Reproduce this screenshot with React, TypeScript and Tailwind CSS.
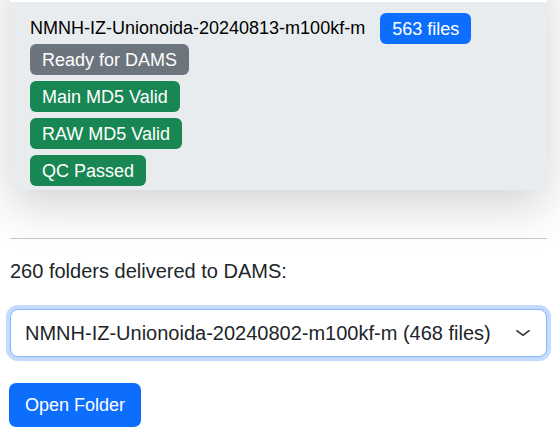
import React from 'react';

const badgeBase =
    'inline-flex items-center h-[31px] px-[12px] rounded-[6px] text-white text-[18px] leading-none';

export default function App() {
    const checks = ['Main MD5 Valid', 'RAW MD5 Valid', 'QC Passed'];

    return (
        <div
            className="w-[560px] h-[443px] overflow-hidden bg-white text-[#212529]"
            style={{ fontFamily: '"Liberation Sans", Arial, sans-serif' }}
        >
            <div className="ml-[10px] w-[537px]">
                {/* Folder card (scrolled, top cut off) */}
                <div className="-mt-[40px] bg-white rounded-[6px] shadow-[0_1rem_3rem_rgba(0,0,0,0.175)]">
                    <div className="h-[42px]" />
                    <div className="bg-[#e9ecef] rounded-b-[6px] px-[20px] pt-[11px] pb-[4px]">
                        <div className="flex items-center gap-[15px] h-[31px]">
                            <span className="text-[18px] text-black">
                                NMNH-IZ-Unionoida-20240813-m100kf-m
                            </span>
                            <span className={`${badgeBase} bg-[#0d6efd]`}>563 files</span>
                        </div>
                        <div className="flex flex-col items-start gap-[6px]">
                            <span className={`${badgeBase} bg-[#6c757d]`}>Ready for DAMS</span>
                            {checks.map((c) => (
                                <span key={c} className={`${badgeBase} bg-[#198754]`}>
                                    {c}
                                </span>
                            ))}
                        </div>
                    </div>
                </div>

                <hr className="mt-[48px] border-0 border-t border-[#c4c4c4]" />

                <p className="mt-[17px] text-[20px] leading-[30px]">260 folders delivered to DAMS:</p>

                {/* Folder select, shown focused */}
                <div className="relative mt-[23px]">
                    <select
                        className="w-full h-[48px] appearance-none bg-white border border-[#86b7fe] rounded-[8px] pl-[14px] pr-[48px] text-[20px] text-[#212529] outline-none shadow-[0_0_0_4px_rgba(13,110,253,0.25)]"
                        style={{ fontFamily: '"Liberation Sans", Arial, sans-serif' }}
                        defaultValue="a"
                    >
                        <option value="a">NMNH-IZ-Unionoida-20240802-m100kf-m (468 files)</option>
                    </select>
                    <svg
                        className="pointer-events-none absolute right-[16px] top-[18px]"
                        width="16"
                        height="12"
                        viewBox="0 0 16 16"
                        fill="none"
                        stroke="#343a40"
                        strokeWidth="2"
                        strokeLinecap="round"
                        strokeLinejoin="round"
                        preserveAspectRatio="none"
                    >
                        <path d="m2 5 6 6 6-6" />
                    </svg>
                </div>

                <button className="block mt-[26px] -ml-px h-[44px] w-[132px] rounded-[7px] bg-[#0d6efd] text-white text-[18px]">
                    Open Folder
                </button>
            </div>
        </div>
    );
}
